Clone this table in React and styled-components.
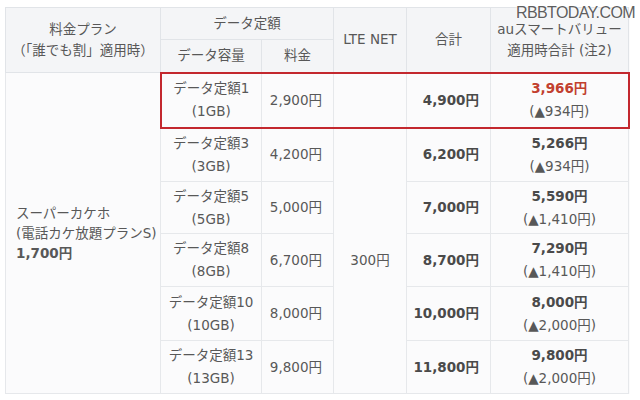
import React from "react";
import styled, { createGlobalStyle, css } from "styled-components";

const Global = createGlobalStyle`
  html, body { margin: 0; padding: 0; background: #ffffff; }
  body { font-family: "DejaVu Sans", "Noto Sans CJK JP", sans-serif; }
`;

const Page = styled.div`
  position: relative;
  width: 640px;
  height: 400px;
  padding: 7px 0 0 5px;
  box-sizing: border-box;
  overflow: hidden;
`;

const Watermark = styled.div`
  position: absolute;
  top: 6px;
  right: 5px;
  font-family: "Liberation Sans", "DejaVu Sans", sans-serif;
  font-size: 16px;
  line-height: 14px;
  letter-spacing: -0.6px;
  color: #5e5e5e;
  text-shadow: 0 0 2px #fff, 0 0 2px #fff;
`;

const Table = styled.table`
  border-collapse: collapse;
  table-layout: fixed;
  width: 623px;
  font-size: 13.5px;
  color: #585858;
  background: #fbfbfc;
  border: 1px solid #e1e4e8;
`;

const Row = styled.tr`
  height: ${(p) => p.$h}px;
`;

const Head = styled.th`
  background: #f4f5f7;
  font-weight: normal;
  border: 1px solid #e1e4e8;
  padding: 0;
  line-height: 21px;
  text-align: center;
  vertical-align: middle;
  color: #585858;
`;

const Cell = styled.td`
  border: 1px solid #e6e8eb;
  padding: 0;
  line-height: 23px;
  vertical-align: middle;
  text-align: ${(p) => p.$align || "center"};
  ${(p) => p.$align === "right" && css`padding-right: 11px;`}
  ${(p) => p.$align === "left" && css`padding-left: 10px; line-height: 20px;`}
  ${(p) => p.$bold && css`font-weight: bold; color: #4a4a4a;`}
  ${(p) =>
    p.$hl &&
    css`
      border-top: 2px solid #c3282e;
      border-bottom: 2px solid #c3282e;
    `}
  ${(p) => p.$hlLeft && css`border-left: 2px solid #c3282e;`}
  ${(p) => p.$hlRight && css`border-right: 2px solid #c3282e;`}
`;

const Strong = styled.div`
  font-weight: bold;
  color: ${(p) => (p.$red ? "#c2402f" : "#4a4a4a")};
`;

const Sub = styled.div``;

const rows = [
  { name: "データ定額1", gb: "(1GB)", fee: "2,900円", total: "4,900円", au: "3,966円", diff: "(▲934円)", h: 55 },
  { name: "データ定額3", gb: "(3GB)", fee: "4,200円", total: "6,200円", au: "5,266円", diff: "(▲934円)", h: 54 },
  { name: "データ定額5", gb: "(5GB)", fee: "5,000円", total: "7,000円", au: "5,590円", diff: "(▲1,410円)", h: 52 },
  { name: "データ定額8", gb: "(8GB)", fee: "6,700円", total: "8,700円", au: "7,290円", diff: "(▲1,410円)", h: 53 },
  { name: "データ定額10", gb: "(10GB)", fee: "8,000円", total: "10,000円", au: "8,000円", diff: "(▲2,000円)", h: 54 },
  { name: "データ定額13", gb: "(13GB)", fee: "9,800円", total: "11,800円", au: "9,800円", diff: "(▲2,000円)", h: 53 },
];

export default function App() {
  return (
    <Page>
      <Global />
      <Table>
        <colgroup>
          <col style={{ width: 155 }} />
          <col style={{ width: 101 }} />
          <col style={{ width: 72 }} />
          <col style={{ width: 73 }} />
          <col style={{ width: 84 }} />
          <col style={{ width: 138 }} />
        </colgroup>
        <thead>
          <Row $h={32}>
            <Head rowSpan={2}>
              料金プラン
              <br />
              （「誰でも割」適用時）
            </Head>
            <Head colSpan={2}>データ定額</Head>
            <Head rowSpan={2}>LTE NET</Head>
            <Head rowSpan={2}>合計</Head>
            <Head rowSpan={2}>
              auスマートバリュー
              <br />
              適用時合計 (注2)
            </Head>
          </Row>
          <Row $h={33}>
            <Head>データ容量</Head>
            <Head>料金</Head>
          </Row>
        </thead>
        <tbody>
          {rows.map((r, i) => {
            const hl = i === 0;
            return (
              <Row key={r.name} $h={r.h}>
                {i === 0 && (
                  <Cell rowSpan={6} $align="left">
                    スーパーカケホ
                    <br />
                    (電話カケ放題プランS)
                    <br />
                    <b>1,700円</b>
                  </Cell>
                )}
                <Cell $hl={hl} $hlLeft={hl}>
                  {r.name}
                  <br />
                  {r.gb}
                </Cell>
                <Cell $hl={hl} $align="right">{r.fee}</Cell>
                {i === 0 && <Cell $hl />}
                {i === 1 && <Cell rowSpan={5}>300円</Cell>}
                <Cell $hl={hl} $align="right" $bold>{r.total}</Cell>
                <Cell $hl={hl} $hlRight={hl}>
                  <Strong $red={hl}>{r.au}</Strong>
                  <Sub>{r.diff}</Sub>
                </Cell>
              </Row>
            );
          })}
        </tbody>
      </Table>
      <Watermark>RBBTODAY.COM</Watermark>
    </Page>
  );
}
